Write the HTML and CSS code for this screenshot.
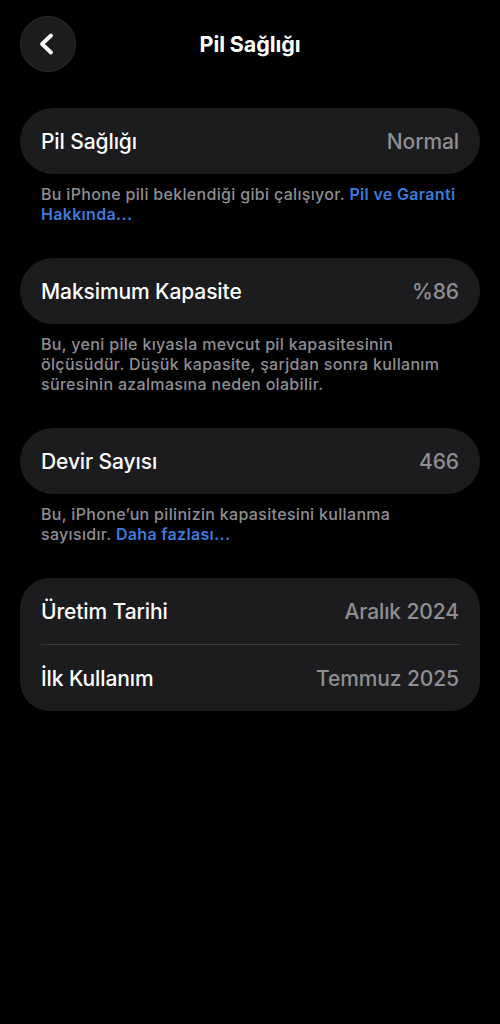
FILE: index.html
```html
<!DOCTYPE html>
<html lang="tr">
<head>
    <meta charset="UTF-8">
    <meta name="viewport" content="width=device-width, initial-scale=1.0">
    <title>Pil Sağlığı</title>
    <link rel="stylesheet" href="styles.css">
</head>
<body>
    <div class="screen">
        <header class="nav-bar">
            <button class="back-btn" aria-label="Geri">
                <svg width="24" height="24" viewBox="0 0 24 24">
                    <path d="M16 3.5 L7 12 L16 20.5" fill="none" stroke="#fff" stroke-width="3.8" stroke-linecap="round" stroke-linejoin="round"/>
                </svg>
            </button>
            <h1>Pil Sağlığı</h1>
        </header>

        <section class="group">
            <div class="card">
                <div class="row">
                    <span class="label">Pil Sağlığı</span>
                    <span class="value">Normal</span>
                </div>
            </div>
            <p class="footer">Bu iPhone pili beklendiği gibi çalışıyor. <a href="#">Pil ve Garanti Hakkında...</a></p>
        </section>

        <section class="group">
            <div class="card">
                <div class="row">
                    <span class="label">Maksimum Kapasite</span>
                    <span class="value">%86</span>
                </div>
            </div>
            <p class="footer">Bu, yeni pile kıyasla mevcut pil kapasitesinin ölçüsüdür. Düşük kapasite, şarjdan sonra kullanım süresinin azalmasına neden olabilir.</p>
        </section>

        <section class="group">
            <div class="card">
                <div class="row">
                    <span class="label">Devir Sayısı</span>
                    <span class="value">466</span>
                </div>
            </div>
            <p class="footer">Bu, iPhone’un pilinizin kapasitesini kullanma sayısıdır. <a href="#">Daha fazlası...</a></p>
        </section>

        <section class="group">
            <div class="card card-list">
                <div class="row">
                    <span class="label">Üretim Tarihi</span>
                    <span class="value">Aralık 2024</span>
                </div>
                <div class="divider"></div>
                <div class="row">
                    <span class="label">İlk Kullanım</span>
                    <span class="value">Temmuz 2025</span>
                </div>
            </div>
        </section>
    </div>
</body>
</html>
```

FILE: styles.css
```css
body {
    margin: 0;
    background-color: #000;
    color: #fff;
    font-family: Inter, 'Noto Sans', sans-serif;
    -webkit-font-smoothing: antialiased;
}

.screen {
    padding: 16px 20px 0;
}

.nav-bar {
    display: flex;
    align-items: center;
    height: 56px;
    margin-bottom: 36px;
}

.back-btn {
    width: 56px;
    height: 56px;
    border-radius: 50%;
    background-color: #1c1c1e;
    border: 1px solid #2c2c2e;
    display: flex;
    align-items: center;
    justify-content: center;
    padding: 0 2px 0 0;
    box-sizing: border-box;
}

.nav-bar h1 {
    flex: 1;
    margin: 0 56px 0 0;
    text-align: center;
    font-size: 21.5px;
    font-weight: 700;
    letter-spacing: -0.1px;
}

.group {
    margin-bottom: 34px;
}

.card {
    background-color: #1c1c1e;
    border-radius: 33px;
    padding: 0 21px;
}

.card-list {
    border-radius: 30px;
}

.row {
    display: flex;
    justify-content: space-between;
    align-items: center;
    height: 66px;
}

.label {
    font-size: 21px;
    font-weight: 500;
    letter-spacing: -0.1px;
}

.value {
    font-size: 21px;
    font-weight: 500;
    color: #8e8e93;
    letter-spacing: -0.1px;
}

.divider {
    height: 1px;
    background-color: #38383a;
}

.footer {
    margin: 10px 0 0;
    padding: 0 21px;
    font-size: 16px;
    font-weight: 500;
    line-height: 20px;
    color: #8e8e93;
    letter-spacing: 0.32px;
}

.footer a {
    color: #3b7bdc;
    text-decoration: none;
    font-weight: 600;
}
```
